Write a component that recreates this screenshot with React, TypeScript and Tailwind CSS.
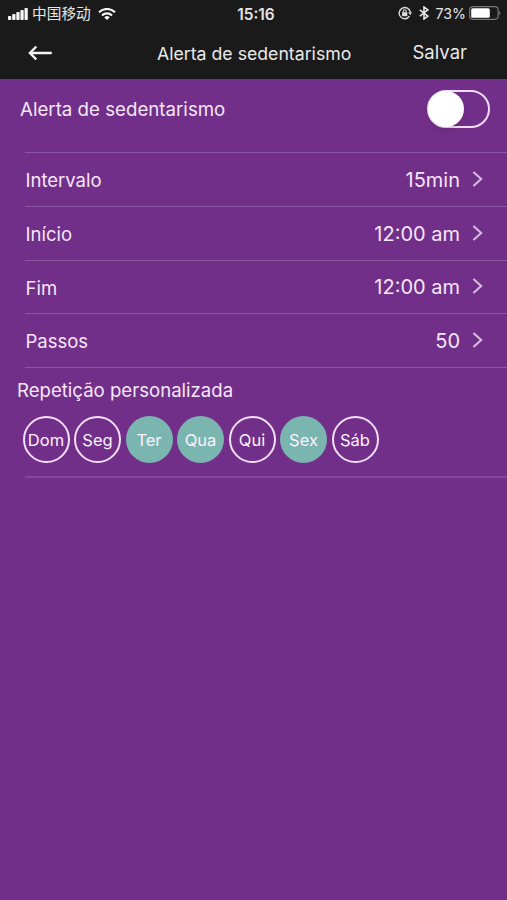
import { clsx } from "clsx";

const settings = [
  { label: "Intervalo", value: "15min" },
  { label: "Início", value: "12:00 am" },
  { label: "Fim", value: "12:00 am" },
  { label: "Passos", value: "50" },
];

const days = [
  { name: "Dom", active: false },
  { name: "Seg", active: false },
  { name: "Ter", active: true },
  { name: "Qua", active: true },
  { name: "Qui", active: false },
  { name: "Sex", active: true },
  { name: "Sáb", active: false },
];

function StatusBar() {
  return (
    <div className="grid h-7 grid-cols-3 items-center pl-2 pr-[5px] text-[#e6e6e6]">
      <div className="flex items-center">
        {/* Signal strength */}
        <svg className="h-3 w-5" viewBox="0 0 20 12" fill="#f5f5f5">
          <rect x="0" y="8" width="3.3" height="4" rx="0.8" />
          <rect x="4.2" y="6" width="3.3" height="6" rx="0.8" />
          <rect x="8.3" y="4" width="3.3" height="8" rx="0.8" />
          <rect x="12.4" y="2" width="3.3" height="10" rx="0.8" />
          <rect x="16.5" y="0" width="3.3" height="12" rx="0.8" />
        </svg>
        <span className="ml-1 -mt-0.5 font-['Noto_Sans_CJK_SC',sans-serif] text-[14.7px] leading-7">中国移动</span>
        {/* Wi-Fi */}
        <svg className="ml-[7px] -mt-px h-3 w-[18px]" viewBox="0 0 18 12" fill="none" stroke="#f5f5f5" strokeWidth="2.2">
          <path d="M1 4.3a11.3 11.3 0 0 1 16 0" />
          <path d="M4 7.5a7.1 7.1 0 0 1 10 0" />
          <path d="M9 12L6.3 9.4a3.8 3.8 0 0 1 5.4 0z" fill="#f5f5f5" stroke="none" />
        </svg>
      </div>
      <span className="pl-0.5 pt-px text-center text-[15.4px] font-semibold">15:16</span>
      <div className="flex items-center justify-end">
        {/* Rotation lock */}
        <svg className="-mt-px h-[14px] w-[14px]" viewBox="0 0 14 14" fill="none" stroke="#dedede">
          <path d="M11.5 10.2A5.6 5.6 0 1 1 12.3 6.2" strokeWidth="1.4" />
          <path d="M10.2 6.3h3.8l-1.8 2.9z" fill="#dedede" stroke="none" />
          <rect x="4.1" y="6.2" width="5.2" height="4" fill="#dedede" stroke="none" />
          <path d="M5.2 6.5V5.2a1.5 1.5 0 0 1 3 0v1.3" strokeWidth="1.1" />
        </svg>
        {/* Bluetooth */}
        <svg className="ml-[7px] -mt-px h-[14px] w-[10px]" viewBox="0 0 10 14" fill="none" stroke="#e6e6e6" strokeWidth="1.6">
          <path d="M0.8 3.8l8 6.3L5 13V1l3.8 2.9-8 6.3" />
        </svg>
        <span className="ml-[7px] text-[14.2px]">73%</span>
        {/* Battery */}
        <svg className="ml-[3px] -mt-px h-[14px] w-[33px]" viewBox="0 0 33 14">
          <rect x="0.7" y="0.7" width="28.4" height="12.6" rx="3.2" fill="none" stroke="#777" strokeWidth="1.2" />
          <rect x="2.2" y="2.2" width="18.6" height="9.6" rx="1.6" fill="#fff" />
          <path d="M30.2 4.8c1.6.7 1.6 3.7 0 4.4z" fill="#777" />
        </svg>
      </div>
    </div>
  );
}

function NavBar() {
  return (
    <div className="flex h-[51px] items-center pl-7 pr-10 text-[#e9e9e9]">
      <svg className="-mt-[2px] h-4 w-6" viewBox="0 0 24 16" fill="none" stroke="#f5f5f5" strokeWidth="2.5">
        <path d="M23.8 8H2.5" />
        <path d="M8.3 1.5L2 8l6.3 6.5" />
      </svg>
      <h1 className="ml-[105px] pt-px text-[17.7px]">Alerta de sedentarismo</h1>
      <button className="-mt-0.5 ml-auto text-[18.5px]">Salvar</button>
    </div>
  );
}

export default function App() {
  return (
    <div className="h-[900px] w-[507px] overflow-hidden bg-[#722f89] font-['Inter',sans-serif] text-[#f5e6fa]">
      <header className="h-[79px] bg-[#1a1a1a]">
        <StatusBar />
        <NavBar />
      </header>

      <div className="flex h-[73px] items-start justify-between pl-5 pr-[17px] pt-[11px]">
        <span className="pt-1.5 text-[18.7px] leading-7">Alerta de sedentarismo</span>
        {/* Toggle, off */}
        <div className="h-[38px] w-[63px] rounded-full border-2 border-[#efdcf5]">
          <div className="-ml-px -mt-px h-9 w-9 rounded-full bg-white shadow-md" />
        </div>
      </div>

      <div className="ml-[25px] border-t-[1.5px] border-[#8c55a0]">
        {settings.map((item) => (
          <div key={item.label} className="flex h-[53.75px] items-center border-b-[1.5px] border-[#8c55a0] pr-6">
            <span className="ml-[0.5px] pt-[3px] text-[18.5px]">{item.label}</span>
            <span className="ml-auto pt-px text-[20px]">{item.value}</span>
            <svg className="-mt-px ml-3 h-4 w-[11px]" viewBox="0 0 11 16" fill="none" stroke="#d5c0dc" strokeWidth="2">
              <path d="M1.4 1l7.8 7-7.8 7" />
            </svg>
          </div>
        ))}
      </div>

      <div className="pt-1.5">
        <h2 className="ml-[17px] text-[18.6px] leading-8">Repetição personalizada</h2>
        <div className="ml-[22.5px] mt-2.5 flex gap-[4.5px]">
          {days.map((day) => (
            <div
              key={day.name}
              className={clsx(
                "flex h-[47px] w-[47px] items-center justify-center rounded-full pt-px text-[16.5px] text-[#fbf2fd]",
                day.active ? "bg-[#7bb5b0]" : "border-2 border-[#f3dff8]",
              )}
            >
              {day.name}
            </div>
          ))}
        </div>
        <div className="ml-[25px] mt-[13px] border-t-2 border-[#83469a]" />
      </div>
    </div>
  );
}
